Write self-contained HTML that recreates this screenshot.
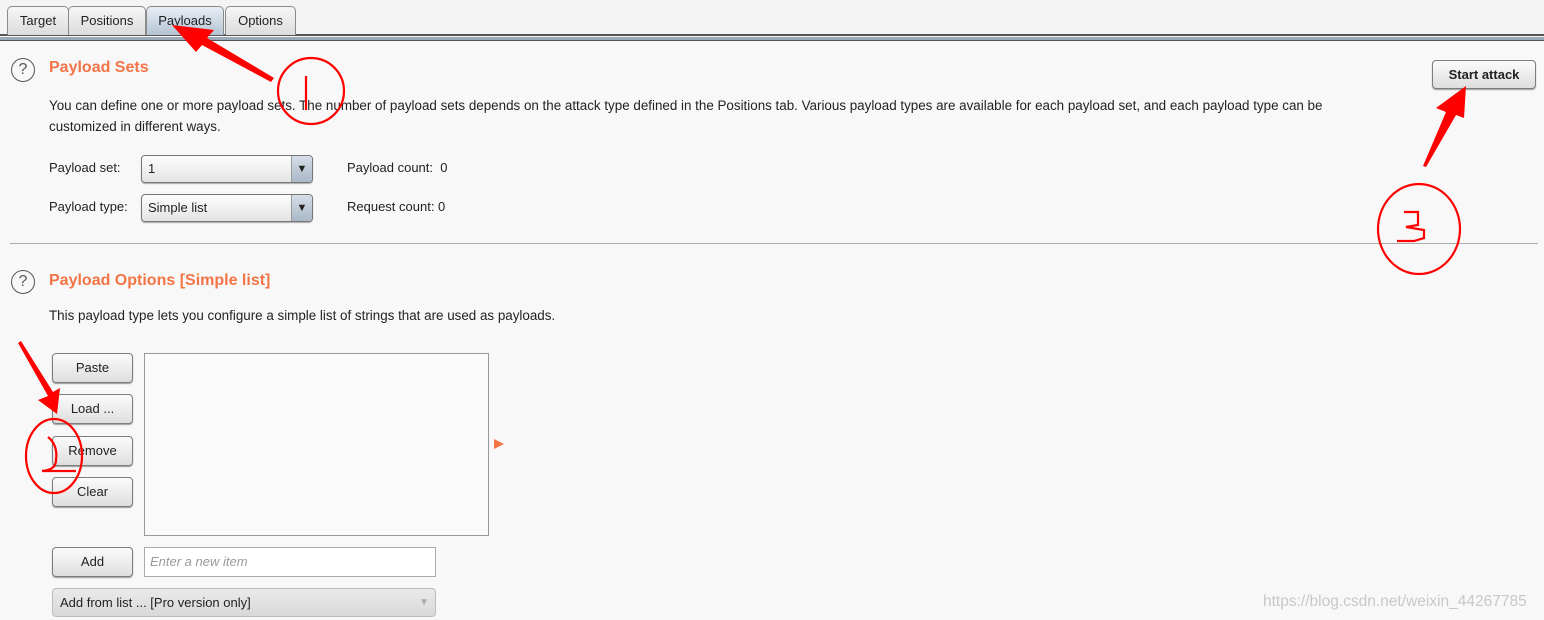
<!DOCTYPE html>
<html><head><style>
body{margin:0;width:1544px;height:620px;background:#f8f8f8;font-family:"Liberation Sans",sans-serif;font-size:13px;color:#222;position:relative;overflow:hidden}
.a{position:absolute}
.tab{position:absolute;top:6px;height:28px;border:1px solid #8a8a8a;border-bottom:none;border-radius:5px 5px 0 0;background:linear-gradient(#f6f6f6,#dcdcdc);line-height:28px;text-align:center;font-size:13px}
.btn{position:absolute;border:1px solid #7d7d7d;border-radius:4px;background:linear-gradient(#fbfbfb,#dedede);text-align:center;box-shadow:0 1px 1px #999;font-size:13px}
.combo{position:absolute;left:141px;width:170px;height:26px;border:1px solid #777;border-radius:4px;background:linear-gradient(#fdfdfd,#e4e4e4);line-height:26px;box-shadow:0 1px 1px #aaa}
.combo span{position:absolute;left:6px}
.combo i{position:absolute;right:0;top:0;width:20px;height:26px;background:linear-gradient(#d6dee8,#aab8c8);border-left:1px solid #999;border-radius:0 4px 4px 0;font-style:normal;font-size:11px;text-align:center}
.title{position:absolute;left:49px;color:#f37446;font-weight:bold;font-size:16px}
.q{position:absolute;left:11px;width:22px;height:22px;border:1.5px solid #555;border-radius:50%;text-align:center;line-height:22px;font-size:16px;color:#555}
</style></head><body>
<div class="a" style="left:0;top:0;width:1544px;height:35px;background:#f4f4f4"></div>
<div class="a" style="left:0;top:34px;width:1544px;height:2px;background:#555"></div>
<div class="a" style="left:0;top:37px;width:1544px;height:3px;background:#9aa8b8;border-bottom:1px solid #555"></div>
<div class="tab" style="left:7px;width:60px">Target</div>
<div class="tab" style="left:68px;width:76px">Positions</div>
<div class="tab" style="left:146px;width:76px;background:linear-gradient(#e8eef5,#b4c4d4)">Payloads</div>
<div class="tab" style="left:225px;width:69px">Options</div>

<div class="q" style="top:58px">?</div>
<div class="title" style="top:59px">Payload Sets</div>
<div class="a" style="left:49px;top:95px;line-height:21px;width:1312px;font-size:13.4px">You can define one or more payload sets. The number of payload sets depends on the attack type defined in the Positions tab. Various payload types are available for each payload set, and each payload type can be customized in different ways.</div>
<div class="a" style="left:49px;top:160px">Payload set:</div>
<div class="combo" style="top:155px"><span>1</span><i>▼</i></div>
<div class="a" style="left:347px;top:160px">Payload count:&nbsp; 0</div>
<div class="a" style="left:49px;top:199px">Payload type:</div>
<div class="combo" style="top:194px"><span>Simple list</span><i>▼</i></div>
<div class="a" style="left:347px;top:199px">Request count:&nbsp;0</div>
<div class="btn" style="left:1432px;top:60px;width:102px;height:27px;line-height:27px;font-weight:bold">Start attack</div>
<div class="a" style="left:10px;top:243px;width:1528px;height:1px;background:#aaa"></div>

<div class="q" style="top:270px">?</div>
<div class="title" style="top:272px">Payload Options [Simple list]</div>
<div class="a" style="left:49px;top:308px;font-size:13.4px">This payload type lets you configure a simple list of strings that are used as payloads.</div>
<div class="btn" style="left:52px;top:353px;width:79px;height:28px;line-height:28px">Paste</div>
<div class="btn" style="left:52px;top:394px;width:79px;height:28px;line-height:28px">Load ...</div>
<div class="btn" style="left:52px;top:436px;width:79px;height:28px;line-height:28px">Remove</div>
<div class="btn" style="left:52px;top:477px;width:79px;height:28px;line-height:28px">Clear</div>
<div class="a" style="left:144px;top:353px;width:343px;height:181px;border:1px solid #999;background:#fafafa"></div>
<div class="a" style="left:494px;top:439px;width:0;height:0;border-left:10px solid #f37446;border-top:5px solid transparent;border-bottom:5px solid transparent"></div>
<div class="btn" style="left:52px;top:547px;width:79px;height:28px;line-height:28px">Add</div>
<div class="a" style="left:144px;top:547px;width:290px;height:28px;border:1px solid #aaa;background:#fff;line-height:28px;color:#999;font-style:italic"><span style="margin-left:5px">Enter a new item</span></div>
<div class="a" style="left:52px;top:588px;width:382px;height:27px;border:1px solid #bbb;border-radius:4px;background:linear-gradient(#eaeaea,#d9d9d9);line-height:27px"><span style="margin-left:7px">Add from list ... [Pro version only]</span><span style="position:absolute;right:6px;color:#aaa;font-size:10px">▼</span></div>
<div class="a" style="left:1263px;top:593px;color:#c8c8c8;font-size:15.5px">https://blog.csdn.net/weixin_44267785</div>

<svg class="a" style="left:0;top:0" width="1544" height="620">
<g fill="red" stroke="none">
<polygon points="274,78 207,38 214,30 172,25 196,52 202,45 271,82"/>
<polygon points="18,343 48,396 38,400 57,414 60,388 53,392 21,341"/>
<polygon points="1423,166 1446,112 1436,108 1466,86 1464,118 1456,115 1426,167"/>
</g>
<g fill="none" stroke="red" stroke-width="2.2">
<ellipse cx="311" cy="91" rx="33" ry="33"/>
<line x1="306" y1="76" x2="306" y2="110"/>
<ellipse cx="54" cy="456" rx="28" ry="37"/>
<path d="M48 437 Q58 445 56 460 Q56 470 42 471 L76 471"/>
<ellipse cx="1419" cy="229" rx="41" ry="45"/>
<path d="M1404 212 L1418 212 L1418 225 L1406 227 L1424 230 L1424 238 L1414 241 L1397 241"/>
</g>
</svg>
</body></html>
